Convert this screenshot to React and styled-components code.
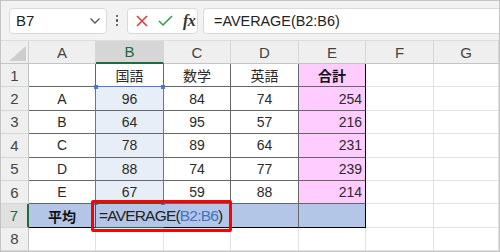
import React from 'react';
import styled, { createGlobalStyle } from 'styled-components';

const Global = createGlobalStyle`
  html, body { margin: 0; padding: 0; background: #fff; }
  body { font-family: "Liberation Sans", "Noto Sans CJK JP", sans-serif; }
  * { box-sizing: border-box; }
`;

const Frame = styled.div`
  width: 500px;
  height: 252px;
  border: 1px solid #c4c4c4;
  overflow: hidden;
  background: #fff;
  display: flex;
  flex-direction: column;
`;

const Toolbar = styled.div`
  flex: none;
  height: 40px;
  background: #f2f2f2;
  border-bottom: 1px solid #dcdcdc;
  display: flex;
  align-items: center;
  padding: 0 0 0 8px;
`;

const Box = styled.div`
  height: 26px;
  background: #fff;
  border: 1px solid #dadada;
  border-radius: 4px;
  display: flex;
  align-items: center;
`;

const NameBox = styled(Box)`
  width: 98px;
  padding: 0 5px 0 6px;
  justify-content: space-between;
  font-size: 15px;
  color: #222;
`;

const Dots = styled.div`
  width: 4px;
  margin: 0 8px 0 8px;
  display: flex;
  flex-direction: column;
  align-items: center;
  gap: 2px;
  span {
    width: 2.5px;
    height: 2.5px;
    border-radius: 50%;
    background: #444;
  }
`;

const IconBox = styled(Box)`
  width: 71px;
  padding: 0 0 0 7px;
  gap: 9px;
`;

const Fx = styled.span`
  font-family: "Liberation Serif", "DejaVu Serif", serif;
  font-style: italic;
  font-weight: bold;
  font-size: 16px;
  color: #333;
  margin-left: 1px;
  letter-spacing: -0.5px;
`;

const FormulaBox = styled(Box)`
  flex: 1;
  margin-left: 5px;
  border-right: none;
  border-radius: 4px 0 0 4px;
  padding-left: 10px;
  font-size: 14.4px;
  color: #222;
`;

const Sheet = styled.div`
  flex: 1;
  display: grid;
  grid-template-columns: 28px 67px 68px 67px 68px 67px 68px 1fr;
  grid-template-rows: 23px repeat(8, 23.4px);
  font-size: 14px;
  color: #333;
`;

const Corner = styled.div`
  background: #efefef;
  border-right: 1px solid #cfcfcf;
  border-bottom: 1px solid #c4c4c4;
  display: flex;
  align-items: flex-end;
  justify-content: flex-end;
  padding: 0 2px 2px 0;
`;

const ColHead = styled.div`
  background: ${p => (p.$active ? '#d6d6d6' : '#efefef')};
  color: ${p => (p.$active ? '#1d6b3f' : '#444')};
  border-right: 1px solid #d6d6d6;
  border-bottom: ${p => (p.$active ? '2px solid #1d6b3f' : '1px solid #c4c4c4')};
  display: flex;
  align-items: center;
  justify-content: center;
  font-size: 15px;
`;

const RowHead = styled.div`
  grid-column: 1;
  grid-row: ${p => p.$row};
  background: ${p => (p.$active ? '#e0e0e0' : '#efefef')};
  color: ${p => (p.$active ? '#1d6b3f' : '#444')};
  border-right: ${p => (p.$active ? '2px solid #1d6b3f' : '1px solid #c4c4c4')};
  border-bottom: 1px solid #d6d6d6;
  display: flex;
  align-items: center;
  justify-content: center;
  font-size: 15px;
`;

const Cell = styled.div`
  grid-column: ${p => p.$col};
  grid-row: ${p => p.$row};
  background: ${p => p.$bg};
  border-right: 1px solid ${p => p.$right};
  border-bottom: 1px solid ${p => p.$bottom};
  display: flex;
  align-items: center;
  justify-content: ${p => p.$align};
  padding: 0 3px;
  font-weight: ${p => (p.$bold ? 700 : 400)};
  color: ${p => (p.$bold ? '#111' : '#2a2a2a')};
  white-space: nowrap;
  overflow: visible;
  min-width: 0;
`;

const Overflow = styled.span`
  position: relative;
  z-index: 2;
  font-size: 15.5px;
  letter-spacing: -0.8px;
  color: #222;
`;

const Ref = styled.span`
  color: #4472c4;
`;

const Range = styled.div`
  grid-column: 3;
  grid-row: 3 / 8;
  margin: -1px 0 0 -1px;
  border: 1px solid #4a78cc;
  position: relative;
  pointer-events: none;
  z-index: 3;
`;

const Handle = styled.span`
  position: absolute;
  width: 4px;
  height: 4px;
  background: #4a78cc;
  ${p => (p.$top ? 'top: -2px;' : 'bottom: -2px;')}
  ${p => (p.$left ? 'left: -2px;' : 'right: -2px;')}
`;

const Active = styled.div`
  grid-column: 3;
  grid-row: 8;
  margin: -1px 0 0 -1px;
  border-top: 1.5px solid #1d6b3f;
  border-left: 1.5px solid #1d6b3f;
  border-bottom: 1.5px solid #1d6b3f;
  pointer-events: none;
  z-index: 3;
`;

const Callout = styled.div`
  grid-column: 3 / 5;
  grid-row: 8;
  margin: -4px -1px -4px -5px;
  border: 3px solid #ff0000;
  border-radius: 2px;
  pointer-events: none;
  z-index: 4;
`;

const COLS = ['A', 'B', 'C', 'D', 'E', 'F', 'G'];
const DATA = [
  ['', '国語', '数学', '英語', '合計'],
  ['A', 96, 84, 74, 254],
  ['B', 64, 95, 57, 216],
  ['C', 78, 89, 64, 231],
  ['D', 88, 74, 77, 239],
  ['E', 67, 59, 88, 214],
  ['平均', null, '', '', ''],
  ['', '', '', '', ''],
];

const DARK = '#666';
const LIGHT = '#e2e2e2';
const ROW7 = '#b4c6e7';

function cellProps(r, c) {
  const inTable = r <= 7 && c <= 4;
  let right = LIGHT;
  let bottom = LIGHT;
  let bg = '#fff';
  let align = 'center';
  if (inTable) {
    right = c === 4 ? '#000' : DARK;
    bottom = r === 7 ? '#000' : DARK;
    if (r === 7 && c === 1) right = ROW7;
    if (r === 7) bg = ROW7;
    else if (c === 4) bg = '#ffccff';
    else if (c === 1 && r >= 2) bg = '#e8eef8';
    if (c === 4 && r >= 2 && r <= 6) align = 'flex-end';
    if (r === 7 && c === 1) align = 'flex-start';
  }
  const bold = (r === 1 && c === 4) || (r === 7 && c === 0);
  return { right, bottom, bg, align, bold };
}

export default function App() {
  const cells = [];
  for (let r = 1; r <= 8; r++) {
    cells.push(
      <RowHead key={`h${r}`} $row={r + 1} $active={r === 7}>
        {r}
      </RowHead>
    );
    for (let c = 0; c < 7; c++) {
      const p = cellProps(r, c);
      let content = c <= 4 ? DATA[r - 1][c] : '';
      if (r === 7 && c === 1) {
        content = (
          <Overflow>
            =AVERAGE(<Ref>B2:B6</Ref>)
          </Overflow>
        );
      }
      cells.push(
        <Cell
          key={`${r}-${c}`}
          $row={r + 1}
          $col={c + 2}
          $right={p.right}
          $bottom={p.bottom}
          $bg={p.bg}
          $align={p.align}
          $bold={p.bold}
        >
          {content}
        </Cell>
      );
    }
  }

  return (
    <>
      <Global />
      <Frame>
        <Toolbar>
          <NameBox>
            <span>B7</span>
            <svg width="12" height="8" viewBox="0 0 12 8">
              <polyline points="1.5,1.5 6,6 10.5,1.5" fill="none" stroke="#555" strokeWidth="1.3" />
            </svg>
          </NameBox>
          <Dots>
            <span />
            <span />
            <span />
          </Dots>
          <IconBox>
            <svg width="14" height="14" viewBox="0 0 14 14">
              <path d="M2 2 L12 12 M12 2 L2 12" stroke="#e5363a" strokeWidth="1.5" fill="none" />
            </svg>
            <svg width="15" height="12" viewBox="0 0 15 12">
              <polyline points="1,6 5,10 14,1" fill="none" stroke="#2f9a4a" strokeWidth="1.5" />
            </svg>
            <Fx>fx</Fx>
          </IconBox>
          <FormulaBox>=AVERAGE(B2:B6)</FormulaBox>
        </Toolbar>
        <Sheet>
          <Corner>
            <svg width="17" height="15" viewBox="0 0 17 15">
              <polygon points="17,0 17,15 0,15" fill="#cdcdcd" />
            </svg>
          </Corner>
          {COLS.map(c => (
            <ColHead key={c} $active={c === 'B'}>
              {c}
            </ColHead>
          ))}
          {cells}
          <Range>
            <Handle $top $left />
            <Handle $top />
            <Handle $left />
            <Handle />
          </Range>
          <Active />
          <Callout />
        </Sheet>
      </Frame>
    </>
  );
}
